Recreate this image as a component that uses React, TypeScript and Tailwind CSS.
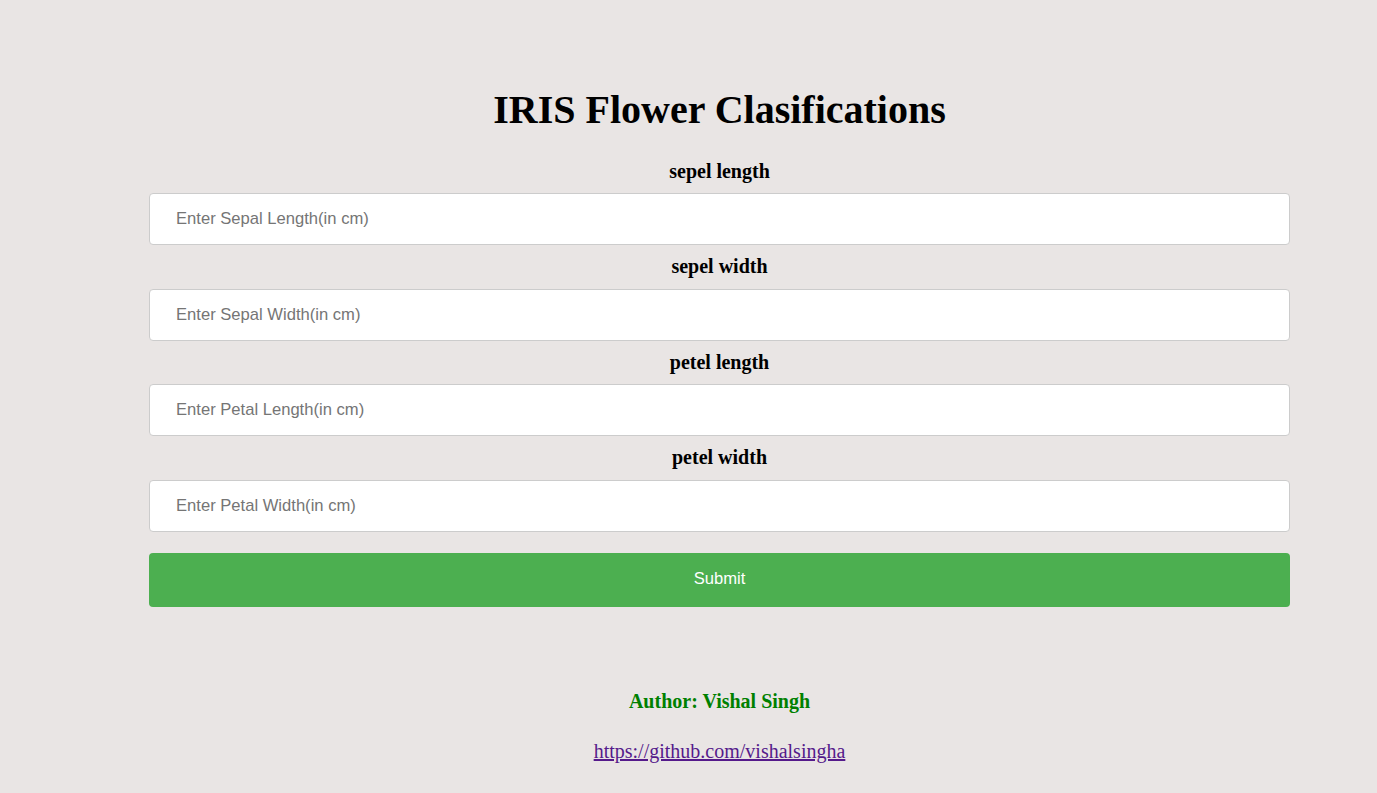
export default function App() {
  const fields = [
    { label: "sepel length", placeholder: "Enter Sepal Length(in cm)" },
    { label: "sepel width", placeholder: "Enter Sepal Width(in cm)" },
    { label: "petel length", placeholder: "Enter Petal Length(in cm)" },
    { label: "petel width", placeholder: "Enter Petal Width(in cm)" },
  ]

  return (
    <div className="min-h-[793px] bg-[#e9e5e4] pt-[87px] font-['Liberation_Serif',serif] text-black">
      <div className="ml-[149px] w-[1141px]">
        <h1 className="text-center text-[40px] font-bold leading-[46px]">IRIS Flower Clasifications</h1>

        <form className="mt-[26.5px]" onSubmit={(e) => e.preventDefault()}>
          {fields.map((f, i) => (
            <div key={f.label} className={i === 0 ? "" : "mt-[10px]"}>
              <h3 className="mb-[11px] text-center text-[20px] font-bold leading-[22.5px]">{f.label}</h3>
              <input
                type="text"
                placeholder={f.placeholder}
                className="block h-[52px] w-full rounded-[4px] border border-[#cccccc] bg-white px-[26px] font-['Liberation_Sans',sans-serif] text-[16.6px] text-black placeholder:text-[#757575] outline-none"
              />
            </div>
          ))}

          <button
            type="submit"
            className="mt-[21px] block h-[54px] w-full rounded-[4px] bg-[#4caf50] font-['Liberation_Sans',sans-serif] text-[16.6px] text-white"
          >
            Submit
          </button>
        </form>

        <h3 className="mt-[83px] text-center text-[20px] font-bold leading-[22px] text-[#008000]">Author: Vishal Singh</h3>
        <p className="mt-[27px] text-center text-[20px] leading-[24px]">
          <a href="#" className="text-[#551a8b] underline">https://github.com/vishalsingha</a>
        </p>
      </div>
    </div>
  )
}
